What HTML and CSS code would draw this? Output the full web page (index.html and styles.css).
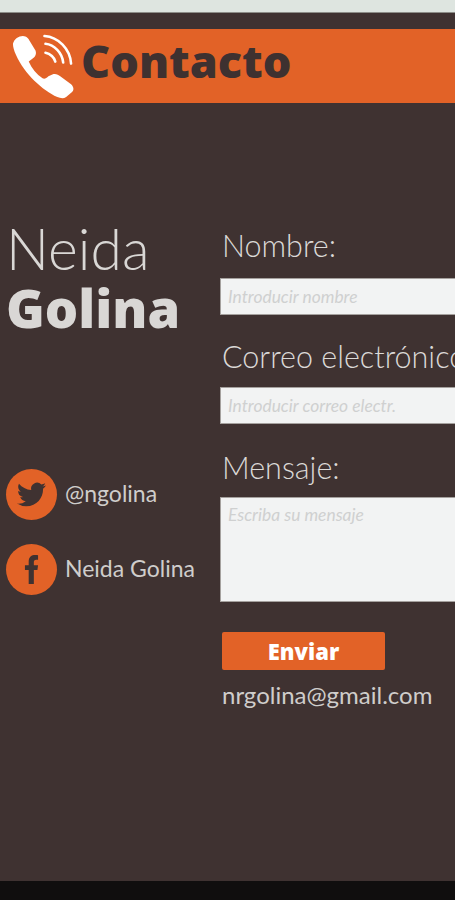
FILE: index.html
```html
<!DOCTYPE html>
<html lang="es">
<head>
<meta charset="utf-8">
<title>Contacto</title>
<link rel="stylesheet" href="styles.css">
</head>
<body>
<div class="strip"></div>
<main class="page">
  <header class="banner">
    <svg class="phone" viewBox="0 0 66 68" aria-hidden="true">
      <path class="handset" d="M2 11 C3 6 8 3 12 3 C16 3 18 6 19 8 L25 18 C26 21 25 24 22 26 L18 29 C21 36 26 42 32 46 C34 47 36 46 38 44 L42 42 C45 41 48 42 50 44 L61 52 C64 55 64 58 62 60 L56 65 C53 67 50 66 47 65 C32 58 14 42 5 22 C3 18 2 14 2 11 Z"/>
      <path class="wave" d="M34 3 C48 4 60 16 61 31"/>
      <path class="wave" d="M35 11 C44 12 52 20 53 30"/>
      <path class="wave" d="M35 20 C40 21 44 25 45 29"/>
    </svg>
    <h1 class="title">Contacto</h1>
  </header>
  <section class="content">
    <aside class="side">
      <h2 class="name"><span class="first">Neida</span><strong class="last">Golina</strong></h2>
      <ul class="social">
        <li class="social-item">
          <span class="badge"><svg class="tw" viewBox="0 0 24 24" aria-hidden="true"><path d="M23.953 4.57a10 10 0 01-2.825.775 4.958 4.958 0 002.163-2.723c-.951.555-2.005.959-3.127 1.184a4.92 4.92 0 00-8.384 4.482C7.69 8.095 4.067 6.13 1.64 3.162a4.822 4.822 0 00-.666 2.475c0 1.71.87 3.213 2.188 4.096a4.904 4.904 0 01-2.228-.616v.06a4.923 4.923 0 003.946 4.827 4.996 4.996 0 01-2.212.085 4.936 4.936 0 004.604 3.417 9.867 9.867 0 01-6.102 2.105c-.39 0-.779-.023-1.17-.067a13.995 13.995 0 007.557 2.209c9.053 0 13.998-7.496 13.998-13.985 0-.21 0-.42-.015-.63A9.935 9.935 0 0024 4.59z"/></svg></span>
          <span class="social-text">@ngolina</span>
        </li>
        <li class="social-item">
          <span class="badge"><svg class="fb" viewBox="0 0 16 32" aria-hidden="true"><path d="M5 32 V17 H1 V12 H5 V8 C5 3 8 1 12 1 C13.500 1 15 1.200 15 1.200 V6 H13 C11 6 10.500 7 10.500 8.500 V12 H15 L14.300 17 H10.500 V32 Z"/></svg></span>
          <span class="social-text">Neida Golina</span>
        </li>
      </ul>
    </aside>
    <form class="form">
      <label class="label" for="n">Nombre:</label>
      <input class="field field-first" id="n" type="text" placeholder="Introducir nombre">
      <label class="label label-mail" for="c">Correo electrónico:</label>
      <input class="field" id="c" type="text" placeholder="Introducir correo electr.">
      <label class="label label-msg" for="m">Mensaje:</label>
      <textarea class="field area" id="m" placeholder="Escriba su mensaje"></textarea>
      <button class="send" type="button">Enviar</button>
      <p class="mail">nrgolina@gmail.com</p>
    </form>
  </section>
</main>
<footer class="foot"></footer>
</body>
</html>
```
FILE: styles.css
```css
* { box-sizing: border-box; }
html, body { margin: 0; padding: 0; }
body {
  width: 455px;
  height: 900px;
  overflow: hidden;
  background: #100e0e;
  font-family: Lato, "Open Sans", sans-serif;
  color: #cfcdcb;
  display: flex;
  flex-direction: column;
}
.strip { height: 13px; background: #dee5e0; border-bottom: 1px solid #8d8d88; flex: none; }
.page { height: 868px; background: #3f3231; padding-top: 16px; flex: none; overflow: hidden; }
.banner {
  height: 74px;
  background: #e26227;
  display: flex;
  align-items: center;
  gap: 5px;
  padding-left: 11px;
}
.phone { width: 65px; height: 67px; flex: none; }
.handset { fill: #fff; }
.wave { fill: none; stroke: #fff; stroke-width: 2.6; stroke-linecap: round; }
.title { margin: 0; padding-bottom: 11px; font-family: "Open Sans", sans-serif; font-size: 45px; line-height: 1; font-weight: 800; color: #3e3130; }
.content { display: flex; padding-top: 116px; }
.side { width: 221px; flex: none; padding-left: 6px; }
.name { margin: 0; font-weight: 400; }
.first { display: block; font-size: 57px; line-height: 58px; font-weight: 300; color: #d9d7d5; }
.last { display: block; margin-top: 2px; font-family: "Open Sans", sans-serif; font-size: 52.500px; line-height: 58px; font-weight: 800; color: #d9d7d5; }
.social { list-style: none; margin: 132px 0 0; padding: 0; display: flex; flex-direction: column; gap: 25px; }
.social-item { display: flex; align-items: center; gap: 8px; font-size: 23px; height: 50px; white-space: nowrap; }
.social-text { padding-bottom: 3px; }
.badge { width: 51px; height: 51px; border-radius: 50%; background: #e26227; display: flex; align-items: center; justify-content: center; flex: none; }
.tw { width: 29px; height: 29px; fill: #3f3231; }
.fb { width: 15px; height: 30px; fill: #3f3231; }
.form { display: flex; flex-direction: column; align-items: flex-start; width: 300px; flex: none; padding-top: 9px; }
.label { font-size: 30.500px; line-height: 34px; font-weight: 300; padding-left: 1px; white-space: nowrap; color: #dbd9d7; }
.label-mail { margin-top: 24px; }
.label-msg { margin-top: 26px; }
.field {
  display: block;
  width: 300px;
  height: 37px;
  margin: 14px 0 0 -1px;
  background: #f2f3f3;
  border: 1px solid #a5a19e;
  border-radius: 0;
  padding: 0 7px;
  font-family: inherit;
  font-size: 17.400px;
  font-style: italic;
}
.field-first { margin-top: 16px; }
.field::placeholder { color: #cfd0d0; opacity: 1; }
.area { height: 105px; margin-top: 13px; padding-top: 6px; resize: none; }
.send {
  width: 163px;
  height: 38px;
  margin: 30px 0 0 1px;
  background: #e26227;
  border: 0;
  border-radius: 2px;
  color: #fff;
  font-family: "Open Sans", sans-serif;
  font-size: 22px;
  font-weight: 800;
}
.mail { margin: 10px 0 0 1px; font-size: 24px; line-height: 30px; }
.foot { flex: 1; }
```
